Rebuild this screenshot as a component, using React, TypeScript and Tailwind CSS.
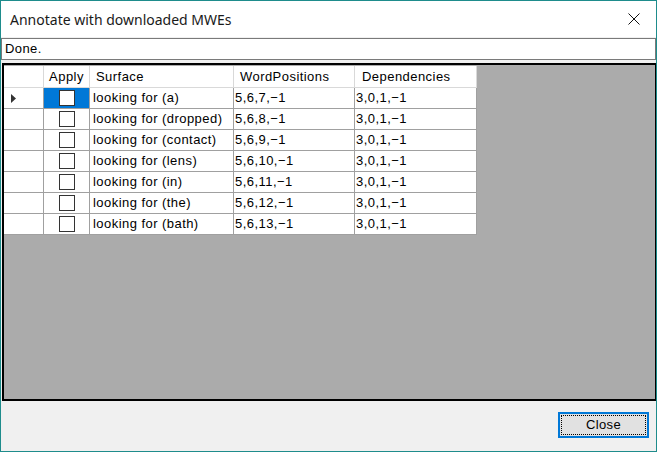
import React from "react";

type Row = {
  surface: string;
  positions: string;
  deps: string;
};

const rows: Row[] = [
  { surface: "looking for (a)", positions: "5,6,7,−1", deps: "3,0,1,−1" },
  { surface: "looking for (dropped)", positions: "5,6,8,−1", deps: "3,0,1,−1" },
  { surface: "looking for (contact)", positions: "5,6,9,−1", deps: "3,0,1,−1" },
  { surface: "looking for (lens)", positions: "5,6,10,−1", deps: "3,0,1,−1" },
  { surface: "looking for (in)", positions: "5,6,11,−1", deps: "3,0,1,−1" },
  { surface: "looking for (the)", positions: "5,6,12,−1", deps: "3,0,1,−1" },
  { surface: "looking for (bath)", positions: "5,6,13,−1", deps: "3,0,1,−1" },
];

function HeaderRow() {
  return (
    <div className="flex h-[22px] bg-white">
      <div className="w-[40px] border-r border-b border-[#d9d9d9]" />
      <div className="w-[46px] border-r border-b border-[#d9d9d9] flex items-center justify-center">
        Apply
      </div>
      <div className="w-[144px] border-r border-b border-[#d9d9d9] flex items-center pl-[6px]">
        Surface
      </div>
      <div className="w-[121px] border-r border-b border-[#d9d9d9] flex items-center pl-[6px]">
        WordPositions
      </div>
      <div className="w-[122px] border-r border-b border-[#d9d9d9] flex items-center pl-[7px]">
        Dependencies
      </div>
    </div>
  );
}

function DataRow({ row, selected }: { row: Row; selected: boolean }) {
  return (
    <div className="flex h-[21px]">
      <div className="w-[40px] bg-white border-r border-b border-[#a0a0a0] flex items-center pl-[7px]">
        {selected && (
          <svg width="6" height="9" viewBox="0 0 6 9">
            <path d="M0 0 L5 4.5 L0 9 Z" fill="#333" />
          </svg>
        )}
      </div>
      <div
        className={`w-[46px] border-r border-b border-[#a0a0a0] flex items-center justify-center ${
          selected ? "bg-[#0078d7]" : "bg-white"
        }`}
      >
        <div className="w-[16px] h-[16px] border border-[#333] bg-white" />
      </div>
      <div className="w-[144px] bg-white border-r border-b border-[#a0a0a0] flex items-center pl-[3px]">
        {row.surface}
      </div>
      <div className="w-[121px] bg-white border-r border-b border-[#a0a0a0] flex items-center pl-[1px]">
        {row.positions}
      </div>
      <div className="w-[122px] bg-white border-r border-b border-[#a0a0a0] flex items-center pl-[1px]">
        {row.deps}
      </div>
    </div>
  );
}

export default function App() {
  return (
    <div
      className="w-[657px] h-[452px] border border-[#1e8c8c] bg-[#f0f0f0] flex flex-col text-black"
      style={{ fontFamily: '"Liberation Sans", Arial, sans-serif' }}
    >
      {/* title bar */}
      <div className="h-[36px] bg-white flex items-center justify-between pl-[9px] pr-[16px] shrink-0">
        <span
          className="text-[14px] text-[#1a1a1a]"
          style={{ fontFamily: '"Noto Sans", "Open Sans", sans-serif' }}
        >
          Annotate with downloaded MWEs
        </span>
        <svg width="12" height="12" viewBox="0 0 12 12">
          <path d="M0.5 0.5 L11.5 11.5 M11.5 0.5 L0.5 11.5" stroke="#111" strokeWidth="1" />
        </svg>
      </div>

      {/* status box */}
      <div className="mt-[1px] h-[22px] border border-[#7a7a7a] bg-white flex items-center pl-[3px] text-[13px] tracking-[0.4px] shrink-0">
        Done.
      </div>

      {/* grid */}
      <div className="mt-[3px] ml-[1px] h-[338px] border-t-2 border-l-2 border-r border-b-2 border-black bg-[#ababab] text-[13px] tracking-[0.45px] shrink-0">
        <div className="flex flex-col w-fit pt-[1px]">
          <HeaderRow />
          {rows.map((r, i) => (
            <DataRow key={r.surface} row={r} selected={i === 0} />
          ))}
        </div>
      </div>

      {/* footer */}
      <div className="flex-1 flex justify-end items-start pt-[11px] pr-[7px]">
        <button className="w-[91px] h-[26px] border-2 border-[#0078d7] bg-[#e1e1e1] p-[1px] text-[13px] tracking-[0.4px]">
          <div className="w-full h-full border border-dotted border-black flex items-center justify-center">
            Close
          </div>
        </button>
      </div>
    </div>
  );
}
